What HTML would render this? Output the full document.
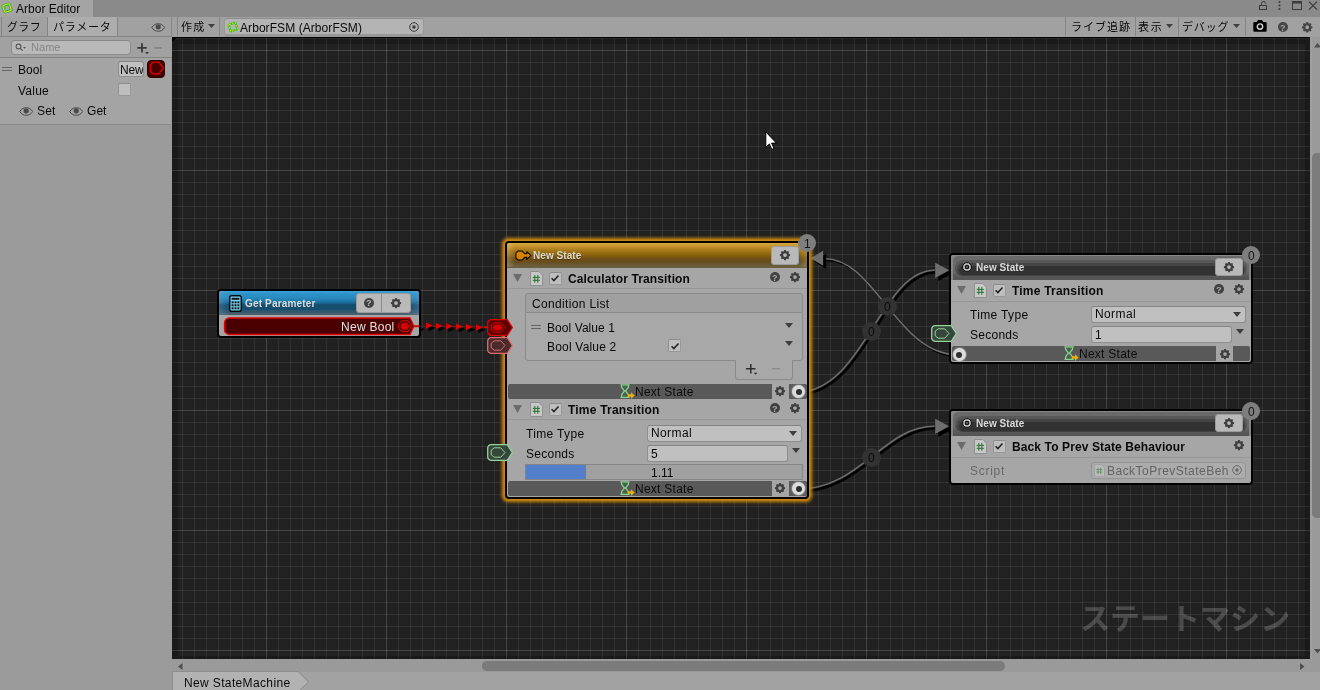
<!DOCTYPE html>
<html lang="ja"><head><meta charset="utf-8"><title>Arbor Editor</title>
<style>
*{box-sizing:border-box}
html,body{margin:0;padding:0}
body{width:1320px;height:690px;position:relative;overflow:hidden;background:#9b9b9b;font-family:"Liberation Sans","Noto Sans CJK JP",sans-serif;font-size:12px;color:#090909}
.a{position:absolute}
.t{position:absolute;white-space:nowrap;will-change:transform}
svg{position:absolute;overflow:visible}
.fld{position:absolute;background:#c0c0c0;border:1px solid #8e8e8e;border-top-color:#858585;border-radius:3px}
.chk{position:absolute;background:#bebebe;border:1px solid #989898;border-top-color:#8c8c8c;border-left-color:#929292;border-radius:2px}
.node{position:absolute;border:2px solid #000;border-radius:4px;background:#a6a6a6}
.hdr{position:absolute;left:0;right:0;top:0}
.btn{position:absolute;background:#b9b9b9;border:1px solid #9c9c9c;border-radius:3px}
.nsb{position:absolute;background:#595959}
.badge{position:absolute;width:18px;height:18px;border-radius:9px;background:#7e7e7e}
.sep{position:absolute;height:1px;background:#979797}
</style></head><body>
<svg width="0" height="0" style="position:absolute"><defs>
<symbol id="gear" viewBox="-8 -8 16 16"><path fill-rule="evenodd" d="M-1.1-6.6h2.2l.35 1.5 1.25.52 1.3-.82 1.56 1.56-.82 1.3.52 1.25 1.5.35v2.2l-1.5.35-.52 1.25.82 1.3-1.56 1.56-1.3-.82-1.25.52-.35 1.5h-2.2l-.35-1.5-1.25-.52-1.3.82-1.56-1.56.82-1.3-.52-1.25-1.5-.35v-2.2l1.5-.35.52-1.25-.82-1.3 1.56-1.56 1.3.82 1.25-.52zM0-2.5a2.5 2.5 0 1 0 0 5 2.5 2.5 0 0 0 0-5z"/></symbol>
<symbol id="chk" viewBox="0 0 12 12"><path d="M2.6 6.2l2.3 2.4 4.6-5" fill="none" stroke="#222" stroke-width="1.5"/></symbol>
<symbol id="eye" viewBox="0 0 16 10"><path d="M.8 5C3 1.6 5.6.8 8 .8s5 .8 7.2 4.2C13 8.400 10.400 9.200 8 9.200S3 8.400.8 5z" fill="none" stroke="#4a4a4a" stroke-width="1.100"/><circle cx="8" cy="4.200" r="2.900" fill="#4a4a4a"/></symbol>
<symbol id="hg" viewBox="0 0 15 15"><path d="M2.200 1.800h5.600L5 5.700zM2.200 12.400L5 8.900l2.800 3.500z" fill="#3b6b47"/><path d="M.4 .8h9.200M.4 13.300h9.200M1.600 1v2.300l2.900 3.700-2.900 3.700v2.300M8.400 1v2.300l-2.900 3.700 2.900 3.700v2.300" fill="none" stroke="#86d48c" stroke-width="1.300"/><path d="M7.800 10.300h3.200v-2.100l3.600 3.350-3.600 3.350v-2.100H7.800z" fill="#e8b000"/></symbol>
<symbol id="scr" viewBox="0 0 13 15"><path d="M.5.5h8.300l3.700 3.700v10.300H.5z" fill="#c8c8c8" stroke="#909090" stroke-width="1"/><path d="M4.800 3.900v7.800M7.800 3.900v7.800M2.700 6.400h7.200M2.700 9.300h7.200" stroke="#22742a" stroke-width="1" fill="none"/></symbol>
<symbol id="tgt" viewBox="-6 -6 12 12"><circle r="4.300" fill="none" stroke="#3a3a3a" stroke-width="1"/><circle r="1.700" fill="#3a3a3a"/></symbol>
</defs></svg>

<div class="a" style="left:0;top:0;width:1320px;height:17px;background:#8a8a8a"></div>
<div class="a" style="left:0;top:0;width:93px;height:17px;background:#a4a4a4"></div>
<svg style="left:.8px;top:1.800px" width="12" height="12" viewBox="0 0 13 13"><rect x="2.700" y="2.700" width="7.600" height="7.600" rx="1" fill="none" stroke="#17b43a" stroke-width="2.700" transform="rotate(-20 6.500 6.500)"/><rect x="2.700" y="2.700" width="7.600" height="7.600" rx="1" fill="none" stroke="#e4e400" stroke-width="1.100" transform="rotate(-20 6.500 6.500)"/></svg>
<div class="t" style="left:15.60px;top:3px;font-size:12px;line-height:12px;color:#0a0a0a;letter-spacing:0.014px;">Arbor Editor</div>
<svg style="left:1255px;top:-0.600px" width="65" height="14" viewBox="1255 0 65 14" fill="none" stroke="#3c3c3c" stroke-width="1">
<rect x="1259.500" y="6.500" width="7" height="4"/><path d="M1261.500 6.500v-2a2 2 0 0 1 4 0"/>
<g fill="#3c3c3c" stroke="none"><circle cx="1279.500" cy="3" r="1"/><circle cx="1279.500" cy="6.500" r="1"/><circle cx="1279.500" cy="10" r="1"/></g>
<rect x="1292.500" y="2.500" width="9" height="8"/><path d="M1292.500 3.500h9" stroke-width="2"/>
<path d="M1309 2.600l8 8M1317 2.600l-8 8" stroke-width="1.300"/></svg>
<div class="a" style="left:0;top:17px;width:1320px;height:20px;background:#a1a1a1"></div><div class="a" style="left:0;top:36px;width:172px;height:1px;background:#858585"></div>
<div class="a" style="left:1px;top:17px;width:1px;height:19px;background:#858585"></div>
<div class="a" style="left:47px;top:17px;width:1px;height:19px;background:#858585"></div>
<div class="a" style="left:48px;top:17px;width:69px;height:19px;background:#adadad"></div>
<div class="a" style="left:117px;top:17px;width:1px;height:19px;background:#858585"></div>
<div class="t" style="left:6.50px;top:22px;font-size:11px;line-height:11px;color:#0a0a0a;letter-spacing:0.333px;">グラフ</div>
<div class="t" style="left:52.50px;top:22px;font-size:11px;line-height:11px;color:#0a0a0a;letter-spacing:0.766px;">パラメータ</div>
<svg style="left:151px;top:22.600px" width="14.400" height="9"><use href="#eye"/></svg>
<div class="a" style="left:171px;top:17px;width:1px;height:19px;background:#858585"></div>
<div class="a" style="left:177px;top:17px;width:1px;height:19px;background:#858585"></div>
<div class="a" style="left:219px;top:17px;width:1px;height:19px;background:#858585"></div>
<div class="t" style="left:180.50px;top:22px;font-size:11px;line-height:11px;color:#0a0a0a;letter-spacing:1.250px;">作成</div>
<svg style="left:208px;top:24px" width="7" height="4"><path d="M0 0h7l-3.500 4z" fill="#404040"/></svg>
<div class="fld" style="left:224px;top:18px;width:199.500px;height:17px;background:#b4b4b4;border-color:#999;border-top-color:#8c8c8c"></div>
<svg style="left:227px;top:21px" width="12" height="12" viewBox="0 0 13 13"><rect x="2.600" y="2.600" width="7.800" height="7.800" rx="1" fill="none" stroke="#2ec02e" stroke-width="2.400" transform="rotate(-20 6.500 6.500)"/><rect x="2.600" y="2.600" width="7.800" height="7.800" rx="1" fill="none" stroke="#e8e000" stroke-width="1" stroke-dasharray="2 1" transform="rotate(-20 6.500 6.500)"/></svg>
<div class="t" style="left:240.30px;top:22px;font-size:12px;line-height:12px;color:#0a0a0a;letter-spacing:0.069px;">ArborFSM (ArborFSM)</div>
<svg style="left:408px;top:21px" width="12" height="12"><use href="#tgt"/></svg><div class="a" style="left:225px;top:35px;width:197px;height:1.500px;background:rgba(0,0,0,.06)"></div>
<div class="a" style="left:1065px;top:17px;width:1px;height:19px;background:#858585"></div>
<div class="a" style="left:1135px;top:17px;width:1px;height:19px;background:#858585"></div>
<div class="a" style="left:1178px;top:17px;width:1px;height:19px;background:#858585"></div>
<div class="a" style="left:1245px;top:17px;width:1px;height:19px;background:#858585"></div>
<div class="t" style="left:1070.50px;top:22px;font-size:11px;line-height:11px;color:#0a0a0a;letter-spacing:1.000px;">ライブ追跡</div>
<div class="t" style="left:1138.20px;top:22px;font-size:11px;line-height:11px;color:#0a0a0a;letter-spacing:1.750px;">表示</div>
<svg style="left:1166px;top:24px" width="7" height="4"><path d="M0 0h7l-3.500 4z" fill="#404040"/></svg>
<div class="t" style="left:1181.90px;top:22px;font-size:11px;line-height:11px;color:#0a0a0a;letter-spacing:0.875px;">デバッグ</div>
<svg style="left:1233px;top:24px" width="7" height="4"><path d="M0 0h7l-3.500 4z" fill="#404040"/></svg>
<svg style="left:1253px;top:19px" width="14" height="13" viewBox="0 0 14 13"><path d="M1.500 3h2.300l1.200-2h4l1.200 2h2.300a1.200 1.200 0 0 1 1.200 1.200v7.300a1.200 1.200 0 0 1-1.200 1.200h-11a1.200 1.200 0 0 1-1.200-1.200V4.200A1.200 1.200 0 0 1 1.500 3z" fill="#000"/><circle cx="7" cy="7.600" r="2.700" fill="#000" stroke="#d8d8d8" stroke-width="1.400"/></svg>
<div class="a" style="left:1278px;top:22px;width:10px;height:10px;border-radius:5px;background:#454545"></div>
<div class="t" style="left:1280.25px;top:24px;font-size:9px;line-height:9px;color:#a0a0a0;font-weight:700;">?</div>
<svg style="left:1300.800px;top:20.800px" width="12.400" height="12.400" fill="#454545"><use href="#gear"/></svg>
<div class="a" style="left:0;top:37px;width:172px;height:653px;background:#9b9b9b"></div>
<div class="a" style="left:0;top:37px;width:172px;height:21px;background:#a1a1a1;border-bottom:1px solid #848484"></div>
<div class="fld" style="left:11px;top:40px;width:120px;height:15px;background:#b9b9b9;border-radius:4px"></div>
<svg style="left:15px;top:43px" width="12" height="9" viewBox="0 0 12 9" fill="none" stroke="#555" stroke-width="1.100"><circle cx="3.500" cy="3.500" r="2.400"/><path d="M5.300 5.300l2.400 2.400"/><path d="M8 4h3l-1.500 1.800z" fill="#555" stroke="none"/></svg>
<div class="t" style="left:30.60px;top:42px;font-size:11px;line-height:11px;color:#868686;letter-spacing:0.039px;">Name</div>
<svg style="left:136px;top:41px" width="30" height="14" viewBox="136 41 30 14"><path d="M137.300 47.900h9.400M142 43.200v9.400" stroke="#3a3a3a" stroke-width="1.800"/><path d="M145 52h4l-2 2.200z" fill="#3a3a3a"/><path d="M154.200 47.900h7.800" stroke="#858585" stroke-width="1.700"/></svg>
<div class="a" style="left:0;top:58px;width:171px;height:67px;background:#a4a4a4;border-bottom:1px solid #8a8a8a"></div>
<div class="a" style="left:2px;top:67px;width:10px;height:1px;background:#666"></div><div class="a" style="left:2px;top:70px;width:10px;height:1px;background:#666"></div>
<div class="t" style="left:18.40px;top:64px;font-size:12px;line-height:12px;color:#090909;letter-spacing:0.042px;">Bool</div>
<div class="fld" style="left:118px;top:61px;width:26px;height:16px;overflow:hidden"></div>
<div class="t" style="left:120.20px;top:64px;font-size:12px;line-height:12px;color:#090909;letter-spacing:-0.172px;clip-path:inset(0 1.200px 0 0);">New</div>
<div class="a" style="left:147px;top:60px;width:18px;height:18px;border-radius:4px;background:#4a0000;border:1px solid #2a0000"></div>
<svg style="left:147px;top:60px" width="18" height="18" viewBox="0 0 18 18"><path d="M3.200 4.700L6.300 2.100H11.500L16.500 8 11.500 13.900H6.300L3.200 11.300z" fill="none" stroke="#e00000" stroke-width="1.200"/></svg>
<div class="t" style="left:18.40px;top:85px;font-size:12px;line-height:12px;color:#090909;letter-spacing:0.237px;">Value</div>
<div class="chk" style="left:118px;top:83px;width:13px;height:13px"></div>
<svg style="left:19.200px;top:106.600px" width="14.400" height="9"><use href="#eye"/></svg>
<div class="t" style="left:36.50px;top:105px;font-size:12px;line-height:12px;color:#090909;letter-spacing:0.161px;">Set</div>
<svg style="left:69.200px;top:106.600px" width="14.400" height="9"><use href="#eye"/></svg>
<div class="t" style="left:86.50px;top:105px;font-size:12px;line-height:12px;color:#090909;letter-spacing:0.052px;">Get</div>
<div class="a" id="graph" style="left:172px;top:37px;width:1138px;height:622px;background:#212121;overflow:hidden">
<div class="a" style="left:0;top:0;right:0;bottom:0;
background-image:linear-gradient(to right,rgba(255,255,255,.095) 1px,transparent 1px),linear-gradient(to bottom,rgba(255,255,255,.095) 1px,transparent 1px),linear-gradient(to right,rgba(255,255,255,.078) 1px,transparent 1px),linear-gradient(to bottom,rgba(255,255,255,.078) 1px,transparent 1px);
background-size:120px 120px,120px 120px,12px 12px,12px 12px;background-position:94px 0,0 13px,10px 0,0 1px"></div>
<div class="a" style="left:0;top:0;right:0;bottom:0;border-style:solid;border-color:rgba(0,0,0,.2);border-width:7px 5px 3px 6px"></div>
<div class="a" style="left:0;top:0;right:0;height:1px;background:#000"></div>
<svg style="left:0;top:1px" width="4" height="4"><path d="M0 0h4l-4 4z" fill="#000"/></svg>
</div>
<div class="a" style="left:1310px;top:37px;width:10px;height:622px;background:#9a9a9a"></div>
<div class="a" style="left:1310px;top:37px;width:2px;height:622px;background:#9f9f9f"></div>
<svg style="left:1313.500px;top:43px" width="7" height="4.500"><path d="M0 4.500h7l-3.500-4.500z" fill="#4e4e4e"/></svg>
<svg style="left:1313.500px;top:649px" width="7" height="4.500"><path d="M0 0h7l-3.500 4.500z" fill="#4e4e4e"/></svg>
<div class="a" style="left:1312.200px;top:153px;width:12px;height:365px;background:#7b7b7b;border-radius:4.800px"></div>
<div class="a" style="left:172px;top:659px;width:1148px;height:13px;background:#9a9a9a"></div>
<svg style="left:177.500px;top:662.500px" width="4.500" height="7"><path d="M4.500 0v7l-4.500-3.500z" fill="#4e4e4e"/></svg>
<svg style="left:1299.500px;top:662.500px" width="4.500" height="7"><path d="M0 0v7l4.500-3.500z" fill="#4e4e4e"/></svg>
<div class="a" style="left:482px;top:661px;width:523px;height:9.700px;background:#7b7b7b;border-radius:4.800px"></div>
<div class="a" style="left:172px;top:671.500px;width:1148px;height:18.500px;background:#a2a2a2"></div>
<svg style="left:172px;top:672px" width="140" height="18" viewBox="0 0 140 18"><path d="M.5 18V-.5H126L136.500 10 128 18" fill="#b2b2b2" stroke="#8c8c8c" stroke-width="1"/></svg>
<div class="t" style="left:184.00px;top:677px;font-size:12px;line-height:12px;color:#090909;letter-spacing:0.361px;">New StateMachine</div>
<svg style="left:0;top:0" width="1320" height="690" viewBox="0 0 1320 690" fill="none"><path d="M795.7 392.5C864.4 392.5 879.8 270.3 934.8 270.3" stroke="#000" stroke-width="2.4" transform="translate(2 2)"/><path d="M796.0 489.5C861.0 489.5 882.5 426.3 934.5 426.3" stroke="#000" stroke-width="2.4" transform="translate(2 2)"/><path d="M957.0 354.7C897.0 354.7 876.0 258.5 824.0 258.5" stroke="#000" stroke-width="1.7" transform="translate(2 2)"/><path d="M795.7 392.5C864.4 392.5 879.8 270.3 934.8 270.3" stroke="#6c6c6c" stroke-width="1.600"/><path d="M796.0 489.5C861.0 489.5 882.5 426.3 934.5 426.3" stroke="#6c6c6c" stroke-width="1.600"/><path d="M957.0 354.7C897.0 354.7 876.0 258.5 824.0 258.5" stroke="#6c6c6c" stroke-width="1.600"/><path d="M949.2 270.3L935.2 262.7L935.2 277.9z" fill="#000" transform="translate(3 3)"/><path d="M949.2 426.3L935.2 418.7L935.2 433.9z" fill="#000" transform="translate(3 3)"/><path d="M810.6 258.3L823.1 250.8L823.1 265.8z" fill="#000" transform="translate(3 3)"/><path d="M949.2 270.3L935.2 262.7L935.2 277.9z" fill="#6e6e6e"/><path d="M949.2 426.3L935.2 418.7L935.2 433.9z" fill="#6e6e6e"/><path d="M810.6 258.3L823.1 250.8L823.1 265.8z" fill="#6e6e6e"/><path d="M433.0 325.6l-7 -3.100v6.200z" fill="#000" transform="translate(2.500 2.500)"/><path d="M443.0 326.0l-7 -3.100v6.200z" fill="#000" transform="translate(2.500 2.500)"/><path d="M453.0 326.3l-7 -3.100v6.200z" fill="#000" transform="translate(2.500 2.500)"/><path d="M463.0 326.7l-7 -3.100v6.200z" fill="#000" transform="translate(2.500 2.500)"/><path d="M473.0 327.0l-7 -3.100v6.200z" fill="#000" transform="translate(2.500 2.500)"/><path d="M483.0 327.4l-7 -3.100v6.200z" fill="#000" transform="translate(2.500 2.500)"/><path d="M433.0 325.6l-7 -3.100v6.200z" fill="#e00000"/><path d="M443.0 326.0l-7 -3.100v6.200z" fill="#e00000"/><path d="M453.0 326.3l-7 -3.100v6.200z" fill="#e00000"/><path d="M463.0 326.7l-7 -3.100v6.200z" fill="#e00000"/><path d="M473.0 327.0l-7 -3.100v6.200z" fill="#e00000"/><path d="M483.0 327.4l-7 -3.100v6.200z" fill="#e00000"/><path d="M421.500 328l3.500 1.200-3.500 1.800z" fill="#000"/><path d="M484 327.200h6" stroke="#e00000" stroke-width="1.600"/></svg>
<div class="a" style="left:877.5px;top:296.7px;width:19px;height:19px;border-radius:50%;background:#323232"></div>
<div class="t" style="left:883.66px;top:301px;font-size:12px;line-height:12px;color:#0a0a0a;">0</div>
<div class="a" style="left:861.5px;top:321.5px;width:19px;height:19px;border-radius:50%;background:#323232"></div>
<div class="t" style="left:867.66px;top:326px;font-size:12px;line-height:12px;color:#0a0a0a;">0</div>
<div class="a" style="left:861.5px;top:447.8px;width:19px;height:19px;border-radius:50%;background:#323232"></div>
<div class="t" style="left:867.66px;top:452px;font-size:12px;line-height:12px;color:#0a0a0a;">0</div>
<div class="node" style="left:505px;top:241px;width:304px;height:258px;box-shadow:0 0 3.500px 2.200px #d08c0e"></div>
<div class="a" style="left:507px;top:243px;width:300px;height:24.500px;border-radius:3px 3px 0 0;background:linear-gradient(to bottom,#d8a63e 0%,#c8962c 12%,#b08020 25%,#9a7014 37%,#85600f 50%,#705014 62%,#664e1c 75%,#6a5a38 88%,#6a6040 100%)"></div>
<div class="a" style="left:507px;top:243px;width:300px;height:24px;border-radius:3px 3px 0 0;background:linear-gradient(to right,rgba(255,240,200,.25),rgba(255,240,200,0) 8px,rgba(255,240,200,0) 292px,rgba(255,240,200,.2))"></div>
<svg style="left:514.600px;top:249.700px" width="16.500" height="11" viewBox="0 0 18 12"><path d="M3.500 1h4l3 3h2.500V1.800L17.300 6 13 10.200V8h-2.500l-3 3h-4L1 8.500v-5z" fill="#d98200" stroke="#000" stroke-width="1.100" stroke-linejoin="round"/></svg>
<div class="t" style="left:532.60px;top:251px;font-size:10px;line-height:10px;color:#dedad0;font-weight:700;letter-spacing:0.067px;text-shadow:0 1px 0 rgba(60,40,0,.6);">New State</div>
<div class="btn" style="left:771px;top:245.500px;width:28px;height:19px"></div>
<svg style="left:779.0px;top:248.8px" width="12" height="12" fill="#3e3e3e"><use href="#gear"/></svg>
<svg style="left:513px;top:274.2px" width="10" height="8"><path d="M0 0h9l-4.500 8z" fill="#6c6c6c"/></svg>
<svg style="left:529.5px;top:270.5px" width="13" height="15"><use href="#scr"/></svg>
<div class="chk" style="left:549px;top:271.5px;width:13px;height:13px"></div>
<svg style="left:549px;top:272.0px" width="12" height="12"><use href="#chk"/></svg>
<div class="t" style="left:568.00px;top:273px;font-size:12px;line-height:12px;color:#090909;font-weight:700;letter-spacing:0.126px;">Calculator Transition</div>
<div class="a" style="left:770.0px;top:272.0px;width:10px;height:10px;border-radius:50%;background:#414141"></div>
<div class="t" style="left:772.25px;top:274px;font-size:9px;line-height:9px;color:#a6a6a6;font-weight:700;">?</div>
<svg style="left:789.0px;top:271.0px" width="12" height="12" fill="#3e3e3e"><use href="#gear"/></svg>
<div class="sep" style="left:507px;top:288.0px;width:300px"></div>
<div class="a" style="left:525px;top:293px;width:278px;height:20px;background:#a0a0a0;border:1px solid #8a8a8a;border-radius:3px 3px 0 0"></div>
<div class="a" style="left:525px;top:312px;width:278px;height:49px;background:#a8a8a8;border:1px solid #8a8a8a;border-radius:0 0 3px 3px"></div>
<div class="t" style="left:532.00px;top:298px;font-size:12px;line-height:12px;color:#090909;letter-spacing:0.342px;">Condition List</div>
<div class="a" style="left:531px;top:325px;width:10px;height:1px;background:#666"></div><div class="a" style="left:531px;top:328px;width:10px;height:1px;background:#666"></div>
<div class="t" style="left:547.00px;top:322px;font-size:12px;line-height:12px;color:#090909;letter-spacing:0.069px;">Bool Value 1</div>
<div class="t" style="left:547.00px;top:341px;font-size:12px;line-height:12px;color:#090909;letter-spacing:0.194px;">Bool Value 2</div>
<div class="chk" style="left:668px;top:339px;width:13px;height:13px"></div>
<svg style="left:668.500px;top:339.500px" width="12" height="12"><use href="#chk"/></svg>
<svg style="left:785.0px;top:322.5px" width="8" height="5"><path d="M0 0h8l-4 5z" fill="#3e3e3e"/></svg>
<svg style="left:785.0px;top:341.0px" width="8" height="5"><path d="M0 0h8l-4 5z" fill="#3e3e3e"/></svg>
<div class="a" style="left:735px;top:360px;width:58px;height:20px;background:#a8a8a8;border:1px solid #8a8a8a;border-top:none;border-radius:0 0 3px 3px"></div>
<svg style="left:744px;top:362px" width="40" height="14" viewBox="744 362 40 14"><path d="M746 368.700h9.500M750.800 364v9.500" stroke="#2e2e2e" stroke-width="1.500"/><path d="M753.800 372.800h3.600l-1.800 2z" fill="#2e2e2e"/><path d="M772 368.700h8" stroke="#8a8a8a" stroke-width="1.300"/></svg>
<div class="nsb" style="left:508px;top:384px;width:299px;height:15px;border-radius:2px"></div>
<svg style="left:620.3px;top:383.8px" width="15" height="15"><use href="#hg"/></svg>
<div class="t" style="left:635.20px;top:386px;font-size:12px;line-height:12px;color:#0c0c0c;letter-spacing:0.257px;">Next State</div>
<div class="a" style="left:772px;top:384px;width:17px;height:15px;background:#a6a6a6"></div>
<svg style="left:774.0px;top:385.0px" width="12" height="12" fill="#3e3e3e"><use href="#gear"/></svg>
<div class="a" style="left:790px;top:384px;width:17px;height:15px;background:#5c5c5c;border-radius:0 3px 3px 0"></div>
<div class="a" style="left:792.3px;top:385.0px;width:13px;height:13px;border-radius:50%;background:#dcdcdc;box-shadow:0 0 1.500px .5px rgba(200,200,200,.6)"></div>
<div class="a" style="left:795.8px;top:388.5px;width:6px;height:6px;border-radius:50%;background:#2e2e2e"></div>
<svg style="left:513px;top:405.2px" width="10" height="8"><path d="M0 0h9l-4.500 8z" fill="#6c6c6c"/></svg>
<svg style="left:529.5px;top:401.5px" width="13" height="15"><use href="#scr"/></svg>
<div class="chk" style="left:549px;top:402.5px;width:13px;height:13px"></div>
<svg style="left:549px;top:403.0px" width="12" height="12"><use href="#chk"/></svg>
<div class="t" style="left:568.00px;top:404px;font-size:12px;line-height:12px;color:#090909;font-weight:700;letter-spacing:0.202px;">Time Transition</div>
<div class="a" style="left:770.0px;top:403.0px;width:10px;height:10px;border-radius:50%;background:#414141"></div>
<div class="t" style="left:772.25px;top:405px;font-size:9px;line-height:9px;color:#a6a6a6;font-weight:700;">?</div>
<svg style="left:789.0px;top:402.0px" width="12" height="12" fill="#3e3e3e"><use href="#gear"/></svg>
<div class="sep" style="left:507px;top:419.0px;width:300px"></div>
<div class="t" style="left:525.80px;top:428px;font-size:12px;line-height:12px;color:#090909;letter-spacing:0.349px;">Time Type</div>
<div class="fld" style="left:647px;top:425px;width:155px;height:17px"></div>
<div class="t" style="left:651.00px;top:427px;font-size:12px;line-height:12px;color:#090909;letter-spacing:0.388px;">Normal</div>
<svg style="left:788.7px;top:431.3px" width="8" height="5"><path d="M0 0h8l-4 5z" fill="#3e3e3e"/></svg>
<div class="t" style="left:525.80px;top:448px;font-size:12px;line-height:12px;color:#090909;letter-spacing:0.257px;">Seconds</div>
<div class="fld" style="left:647px;top:445px;width:141px;height:17px"></div>
<div class="t" style="left:650.50px;top:448px;font-size:12px;line-height:12px;color:#090909;">5</div>
<svg style="left:791.5px;top:447.5px" width="8" height="5"><path d="M0 0h8l-4 5z" fill="#3e3e3e"/></svg>
<div class="a" style="left:525px;top:464px;width:278px;height:16px;background:#a0a0a0;border:1px solid #858585"></div>
<div class="a" style="left:526px;top:465px;width:60px;height:14px;background:#537ec9"></div>
<div class="t" style="left:650.77px;top:467px;font-size:12px;line-height:12px;color:#090909;">1.11</div>
<div class="nsb" style="left:508px;top:481px;width:299px;height:15px;border-radius:2px"></div>
<svg style="left:620.3px;top:480.8px" width="15" height="15"><use href="#hg"/></svg>
<div class="t" style="left:635.20px;top:483px;font-size:12px;line-height:12px;color:#0c0c0c;letter-spacing:0.257px;">Next State</div>
<div class="a" style="left:772px;top:481px;width:17px;height:15px;background:#a6a6a6"></div>
<svg style="left:774.0px;top:482.0px" width="12" height="12" fill="#3e3e3e"><use href="#gear"/></svg>
<div class="a" style="left:790px;top:481px;width:17px;height:15px;background:#5c5c5c;border-radius:0 3px 3px 0"></div>
<div class="a" style="left:792.3px;top:482.0px;width:13px;height:13px;border-radius:50%;background:#dcdcdc;box-shadow:0 0 1.500px .5px rgba(200,200,200,.6)"></div>
<div class="a" style="left:795.8px;top:485.5px;width:6px;height:6px;border-radius:50%;background:#2e2e2e"></div>
<div class="badge" style="left:798.3px;top:234.0px"></div>
<div class="t" style="left:803.96px;top:238px;font-size:12px;line-height:12px;color:#141414;">1</div>
<svg style="left:486.5px;top:318.5px" width="27" height="17" viewBox="0 0 27 17"><path d="M4 .7H20.300L25.300 8.500 20.300 16.300H4A3.300 3.300 0 0 1 .7 13V4A3.300 3.300 0 0 1 4 .7z" fill="#5a0000" stroke="#e00000" stroke-width="1.300"/><path d="M7.200 3.800h6.500l4.300 4.700-4.300 4.700H7.200L4.200 10.800V6.200z" fill="#5a0000" stroke="#e00000" stroke-width="1"/><path d="M8.300 5.400h4.700l2.900 3.100-2.900 3.100H8.300L6 9.900V7.100z" fill="#d40000"/></svg>
<svg style="left:486.5px;top:337.0px" width="27" height="17" viewBox="0 0 27 17"><path d="M4 .7H20.300L25.300 8.500 20.300 16.300H4A3.300 3.300 0 0 1 .7 13V4A3.300 3.300 0 0 1 4 .7z" fill="#4a2a2a" stroke="#e06a6a" stroke-width="1.300"/><path d="M7.200 3.800h6.500l4.300 4.700-4.300 4.700H7.200L4.200 10.800V6.200z" fill="#4a2a2a" stroke="#e06a6a" stroke-width="1"/></svg>
<svg style="left:486.5px;top:444.0px" width="27" height="17" viewBox="0 0 27 17"><path d="M4 .7H20.300L25.300 8.500 20.300 16.300H4A3.300 3.300 0 0 1 .7 13V4A3.300 3.300 0 0 1 4 .7z" fill="#36463a" stroke="#93d49a" stroke-width="1.300"/><path d="M7.200 3.800h6.500l4.300 4.700-4.300 4.700H7.200L4.200 10.800V6.200z" fill="#36463a" stroke="#93d49a" stroke-width="1"/></svg>
<div class="node" style="left:949px;top:253px;width:304px;height:111px"></div>
<div class="a" style="left:951px;top:254.8px;width:300px;height:24.800px;border-radius:3px 3px 0 0;background:#868686"></div>
<div class="a" style="left:952.8px;top:255.5px;width:296.4px;height:24.100px;border-radius:5px 5px 0 0;background:linear-gradient(to bottom,#6a6a6a 0,#686868 60%,#555 90%)"></div>
<div class="a" style="left:954.8px;top:259.8px;width:292.4px;height:16.700px;border-radius:8.300px;background:linear-gradient(to bottom,#585858 0,#585858 50%,#404040 90%)"></div>
<div class="a" style="left:956.8px;top:262.9px;width:288.4px;height:11.800px;border-radius:5.900px;background:#454545"></div>
<div class="a" style="left:958.5px;top:265.6px;width:285.0px;height:9.100px;border-radius:4.500px;background:#323232"></div>
<svg style="left:960.8px;top:261.0px" width="12" height="12" viewBox="-6 -6 12 12"><circle r="4.400" fill="#c2c2c2" stroke="#0a0a0a" stroke-width="1"/><circle r="2.300" fill="#111"/><circle r="1.050" fill="#6a6a6a"/></svg>
<div class="t" style="left:976.20px;top:263px;font-size:10px;line-height:10px;color:#dadada;font-weight:700;letter-spacing:0.067px;">New State</div>
<div class="btn" style="left:1215px;top:258px;width:28px;height:18px"></div>
<svg style="left:1223.0px;top:261.0px" width="12" height="12" fill="#3e3e3e"><use href="#gear"/></svg>
<svg style="left:957px;top:286.2px" width="10" height="8"><path d="M0 0h9l-4.500 8z" fill="#6c6c6c"/></svg>
<svg style="left:973.5px;top:282.5px" width="13" height="15"><use href="#scr"/></svg>
<div class="chk" style="left:993px;top:283.5px;width:13px;height:13px"></div>
<svg style="left:993px;top:284.0px" width="12" height="12"><use href="#chk"/></svg>
<div class="t" style="left:1012.00px;top:285px;font-size:12px;line-height:12px;color:#090909;font-weight:700;letter-spacing:0.202px;">Time Transition</div>
<div class="a" style="left:1214.0px;top:284.0px;width:10px;height:10px;border-radius:50%;background:#414141"></div>
<div class="t" style="left:1216.25px;top:286px;font-size:9px;line-height:9px;color:#a6a6a6;font-weight:700;">?</div>
<svg style="left:1233.0px;top:283.0px" width="12" height="12" fill="#3e3e3e"><use href="#gear"/></svg>
<div class="sep" style="left:951px;top:300.5px;width:300px"></div>
<div class="t" style="left:969.80px;top:309px;font-size:12px;line-height:12px;color:#090909;letter-spacing:0.349px;">Time Type</div>
<div class="fld" style="left:1091px;top:306px;width:155px;height:17px"></div>
<div class="t" style="left:1095.00px;top:308px;font-size:12px;line-height:12px;color:#090909;letter-spacing:0.388px;">Normal</div>
<svg style="left:1232.7px;top:312.3px" width="8" height="5"><path d="M0 0h8l-4 5z" fill="#3e3e3e"/></svg>
<div class="t" style="left:969.80px;top:329px;font-size:12px;line-height:12px;color:#090909;letter-spacing:0.257px;">Seconds</div>
<div class="fld" style="left:1091px;top:326px;width:141px;height:17px"></div>
<div class="t" style="left:1094.50px;top:329px;font-size:12px;line-height:12px;color:#090909;">1</div>
<svg style="left:1235.5px;top:329.0px" width="8" height="5"><path d="M0 0h8l-4 5z" fill="#3e3e3e"/></svg>
<div class="nsb" style="left:952px;top:346px;width:298px;height:15px;border-radius:2px"></div>
<svg style="left:1064.300px;top:345.800px" width="15" height="15"><use href="#hg"/></svg>
<div class="t" style="left:1079.20px;top:348px;font-size:12px;line-height:12px;color:#0c0c0c;letter-spacing:0.257px;">Next State</div>
<div class="a" style="left:1216px;top:346px;width:17px;height:15px;background:#a6a6a6"></div>
<svg style="left:1218.5px;top:347.5px" width="12" height="12" fill="#3e3e3e"><use href="#gear"/></svg>
<div class="a" style="left:952.5px;top:348.0px;width:13px;height:13px;border-radius:50%;background:#dcdcdc;box-shadow:0 0 1.500px .5px rgba(200,200,200,.6)"></div>
<div class="a" style="left:956.0px;top:351.5px;width:6px;height:6px;border-radius:50%;background:#2e2e2e"></div>
<div class="badge" style="left:1242.0px;top:246.0px"></div>
<div class="t" style="left:1247.66px;top:250px;font-size:12px;line-height:12px;color:#141414;">0</div>
<svg style="left:931.0px;top:324.5px" width="27" height="17" viewBox="0 0 27 17"><path d="M4 .7H20.300L25.300 8.500 20.300 16.300H4A3.300 3.300 0 0 1 .7 13V4A3.300 3.300 0 0 1 4 .7z" fill="#36463a" stroke="#93d49a" stroke-width="1.300"/><path d="M7.200 3.800h6.500l4.300 4.700-4.300 4.700H7.200L4.200 10.800V6.200z" fill="#36463a" stroke="#93d49a" stroke-width="1"/></svg>
<div class="node" style="left:949px;top:409px;width:304px;height:75.500px"></div>
<div class="a" style="left:951px;top:410.8px;width:300px;height:24.800px;border-radius:3px 3px 0 0;background:#868686"></div>
<div class="a" style="left:952.8px;top:411.5px;width:296.4px;height:24.100px;border-radius:5px 5px 0 0;background:linear-gradient(to bottom,#6a6a6a 0,#686868 60%,#555 90%)"></div>
<div class="a" style="left:954.8px;top:415.8px;width:292.4px;height:16.700px;border-radius:8.300px;background:linear-gradient(to bottom,#585858 0,#585858 50%,#404040 90%)"></div>
<div class="a" style="left:956.8px;top:418.9px;width:288.4px;height:11.800px;border-radius:5.900px;background:#454545"></div>
<div class="a" style="left:958.5px;top:421.6px;width:285.0px;height:9.100px;border-radius:4.500px;background:#323232"></div>
<svg style="left:960.8px;top:417.0px" width="12" height="12" viewBox="-6 -6 12 12"><circle r="4.400" fill="#c2c2c2" stroke="#0a0a0a" stroke-width="1"/><circle r="2.300" fill="#111"/><circle r="1.050" fill="#6a6a6a"/></svg>
<div class="t" style="left:976.20px;top:419px;font-size:10px;line-height:10px;color:#dadada;font-weight:700;letter-spacing:0.067px;">New State</div>
<div class="btn" style="left:1215px;top:414px;width:28px;height:18px"></div>
<svg style="left:1223.0px;top:417.0px" width="12" height="12" fill="#3e3e3e"><use href="#gear"/></svg>
<svg style="left:957px;top:442.2px" width="10" height="8"><path d="M0 0h9l-4.500 8z" fill="#6c6c6c"/></svg>
<svg style="left:973.5px;top:438.5px" width="13" height="15"><use href="#scr"/></svg>
<div class="chk" style="left:993px;top:439.5px;width:13px;height:13px"></div>
<svg style="left:993px;top:440.0px" width="12" height="12"><use href="#chk"/></svg>
<div class="t" style="left:1012.00px;top:441px;font-size:12px;line-height:12px;color:#090909;font-weight:700;letter-spacing:0.113px;">Back To Prev State Behaviour</div>
<svg style="left:1233.0px;top:439.0px" width="12" height="12" fill="#3e3e3e"><use href="#gear"/></svg>
<div class="sep" style="left:951px;top:456.5px;width:300px"></div>
<div class="t" style="left:969.80px;top:465px;font-size:12px;line-height:12px;color:#686868;letter-spacing:0.719px;">Script</div>
<div class="fld" style="left:1091px;top:461.500px;width:155px;height:17px;background:#acacac;border-color:#949494"></div>
<svg style="left:1094px;top:463.500px;opacity:.55" width="11" height="13" viewBox="0 0 13 15"><use href="#scr"/></svg>
<div class="t" style="left:1106.50px;top:465px;font-size:12px;line-height:12px;color:#636363;letter-spacing:0.477px;">BackToPrevStateBeh</div>
<svg style="left:1231px;top:464px" width="12" height="12" viewBox="-6 -6 12 12"><circle r="4.300" fill="none" stroke="#6a6a6a" stroke-width="1"/><circle r="1.700" fill="#6a6a6a"/></svg>
<div class="badge" style="left:1242.0px;top:402.0px"></div>
<div class="t" style="left:1247.66px;top:406px;font-size:12px;line-height:12px;color:#141414;">0</div>
<div class="node" style="left:217px;top:289px;width:204px;height:48.500px"></div>
<div class="a" style="left:219px;top:291px;width:200px;height:24px;border-radius:3px 3px 0 0;background:linear-gradient(to bottom,#3aa2d6 0%,#2c94c8 12%,#2a8cbe 27%,#1f7cae 40%,#196a96 50%,#164e6e 57%,#164e6e 77%,#2e566c 80%,#2e566c 89%,#48606e 92%,#48606e 100%)"></div>
<div class="a" style="left:219px;top:291px;width:200px;height:24px;border-radius:3px 3px 0 0;background:linear-gradient(to right,rgba(120,160,200,.35),rgba(120,160,200,0) 10px,rgba(120,160,200,0) 188px,rgba(120,160,200,.3))"></div>
<svg style="left:229px;top:295px" width="13" height="17" viewBox="0 0 13 17"><rect x=".6" y=".6" width="11.800" height="15.800" rx="1.500" fill="#0a1a22" stroke="#000" stroke-width="1"/><rect x="1.500" y="1.500" width="10" height="14" rx="1" fill="#7fd0ea"/><rect x="2.600" y="2.800" width="7.800" height="2" fill="#0a1a22"/><g fill="#0a1a22"><rect x="2.600" y="6.300" width="2" height="2"/><rect x="5.500" y="6.300" width="2" height="2"/><rect x="8.400" y="6.300" width="2" height="2"/><rect x="2.600" y="9.300" width="2" height="2"/><rect x="5.500" y="9.300" width="2" height="2"/><rect x="8.400" y="9.300" width="2" height="2"/><rect x="2.600" y="12.300" width="2" height="2"/><rect x="5.500" y="12.300" width="2" height="2"/><rect x="8.400" y="12.300" width="2" height="2"/></g></svg>
<div class="t" style="left:244.50px;top:299px;font-size:10px;line-height:10px;color:#dcdcdc;font-weight:700;letter-spacing:0.163px;">Get Parameter</div>
<div class="btn" style="left:355.500px;top:293px;width:55.500px;height:19.500px"></div>
<div class="a" style="left:381px;top:294px;width:1px;height:17.500px;background:#8e8e8e"></div>
<div class="a" style="left:363.5px;top:297.5px;width:10px;height:10px;border-radius:50%;background:#414141"></div>
<div class="t" style="left:365.75px;top:299px;font-size:9px;line-height:9px;color:#b9b9b9;font-weight:700;">?</div>
<svg style="left:390.0px;top:296.5px" width="12" height="12" fill="#3e3e3e"><use href="#gear"/></svg>
<svg style="left:222px;top:316px" width="200" height="21" viewBox="222 316 200 21"><path d="M229.500 318H410l3.800 8.200L410 334.500H229.500A5 5 0 0 1 224.500 329.500V323A5 5 0 0 1 229.500 318z" fill="#4a0000" stroke="#e00000" stroke-width="1.300"/><path d="M413 326.200h6" stroke="#e00000" stroke-width="2"/><path d="M402 320.800h6l3.600 5.400-3.600 5.400h-6l-3.200-3v-4.800z" fill="#4a0000" stroke="#f01010" stroke-width=".9"/><path d="M402.800 322.700h4.300l2.400 3.500-2.400 3.500h-4.300l-2.100-2v-3z" fill="#d80000"/></svg>
<div class="t" style="left:341.30px;top:321px;font-size:12px;line-height:12px;color:#e2e2e2;letter-spacing:0.268px;">New Bool</div>
<div class="t" style="left:1079.50px;top:604px;font-size:30px;line-height:30px;color:rgba(255,255,255,.19);font-weight:700;">ステートマシン</div>
<svg style="left:765px;top:131px" width="14" height="20" viewBox="0 0 14 20"><path d="M.8 .9V16.300L4.400 13 6.800 18.400 9 17.500 6.600 12.100H11.400z" fill="#fff" stroke="#000" stroke-width="1" stroke-linejoin="round"/></svg>
</body></html>
